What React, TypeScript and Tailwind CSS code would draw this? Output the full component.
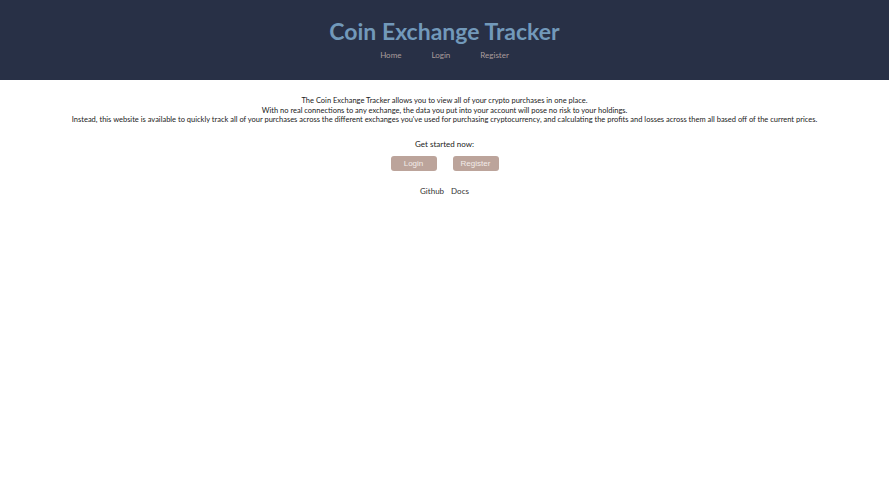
export default function App() {
  return (
    <div className="min-h-[500px] bg-white font-['Lato',sans-serif] text-[#222]">
      {/* Header */}
      <header className="h-20 bg-[#283046] flex flex-col items-center">
        <h1 className="mt-[15px] text-[23px] leading-[32px] font-bold text-[#7299ba]">
          Coin Exchange Tracker
        </h1>
        <nav className="mt-[2px] flex gap-[30px] text-[8px] leading-[12px] text-[#ab9d9c]">
          <a>Home</a>
          <a>Login</a>
          <a>Register</a>
        </nav>
      </header>

      <main className="flex flex-col items-center">
        <div className="mt-[16px] text-center text-[7.5px] leading-[9.7px] text-[#222]">
          <p>The Coin Exchange Tracker allows you to view all of your crypto purchases in one place.</p>
          <p>With no real connections to any exchange, the data you put into your account will pose no risk to your holdings.</p>
          <p>
            Instead, this website is available to quickly track all of your purchases across the different exchanges
            you've used for purchasing cryptocurrency, and calculating the profits and losses across them all based off
            of the current prices.
          </p>
        </div>

        <p className="mt-[14px] text-[8px] leading-[10px]">Get started now:</p>

        <div className="mt-[7px] flex gap-[16px]">
          <button className="w-[46px] h-[15px] rounded-[3px] bg-[#bca49b] font-['Liberation_Sans',sans-serif] text-[8px] text-[#f3ece9]">
            Login
          </button>
          <button className="w-[46px] h-[15px] rounded-[3px] bg-[#bca49b] font-['Liberation_Sans',sans-serif] text-[8px] text-[#f3ece9]">
            Register
          </button>
        </div>

        <div className="mt-[15px] flex gap-[7px] text-[8px] leading-[10px] text-[#333]">
          <a>Github</a>
          <a>Docs</a>
        </div>
      </main>
    </div>
  )
}
